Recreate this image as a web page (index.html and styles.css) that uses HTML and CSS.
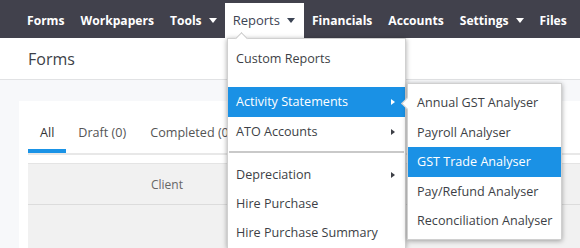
FILE: index.html
```html
<!DOCTYPE html>
<html>
<head>
<meta charset="utf-8">
<link rel="stylesheet" href="styles.css">
</head>
<body>
<nav class="topnav">
  <a class="nav-item">Forms</a>
  <a class="nav-item">Workpapers</a>
  <a class="nav-item">Tools <span class="caret"></span></a>
  <a class="nav-item active">Reports <span class="caret"></span></a>
  <a class="nav-item">Financials</a>
  <a class="nav-item">Accounts</a>
  <a class="nav-item">Settings <span class="caret"></span></a>
  <a class="nav-item">Files</a>
</nav>
<header class="page-header"><h1>Forms</h1></header>
<main class="page">
  <section class="card">
    <div class="tabs">
      <span class="tab active">All</span>
      <span class="tab">Draft (0)</span>
      <span class="tab">Completed (0)</span>
    </div>
    <div class="table-head"><span class="col-client">Client</span></div>
    <div class="table-body"></div>
  </section>
</main>

<ul class="menu menu-main">
  <li class="menu-item">Custom Reports</li>
  <li class="menu-item sub selected">Activity Statements</li>
  <li class="menu-item sub">ATO Accounts</li>
  <li class="divider"></li>
  <li class="menu-item sub">Depreciation</li>
  <li class="menu-item">Hire Purchase</li>
  <li class="menu-item">Hire Purchase Summary</li>
</ul>
<ul class="menu menu-sub">
  <li class="menu-item">Annual GST Analyser</li>
  <li class="menu-item">Payroll Analyser</li>
  <li class="menu-item selected">GST Trade Analyser</li>
  <li class="menu-item">Pay/Refund Analyser</li>
  <li class="menu-item">Reconciliation Analyser</li>
</ul>
</body>
</html>
```

FILE: styles.css
```css
* { box-sizing: border-box; }
html, body { margin: 0; padding: 0; }
body {
  width: 580px;
  height: 248px;
  overflow: hidden;
  font-family: "Open Sans", "Liberation Sans", sans-serif;
  font-size: 13px;
  color: #444;
  background: #f7f8fa;
  position: relative;
}
.topnav {
  display: flex;
  height: 38px;
  background: #41414c;
  padding: 3px 0 0 19px;
  align-items: stretch;
  overflow: hidden;
}
.nav-item {
  display: flex;
  align-items: center;
  padding: 0 8px 1px 8px;
  color: #fff;
  font-weight: 700;
  font-size: 12.1px;
  white-space: nowrap;
}
.nav-item.active {
  background: #fff;
  color: #3c4454;
  font-weight: 400;
  font-size: 13px;
  padding-right: 9px;
}
.caret {
  display: inline-block;
  width: 0; height: 0;
  border-left: 4px solid transparent;
  border-right: 4px solid transparent;
  border-top: 5px solid #fff;
  margin-left: 7px;
  margin-top: 1px;
}
.nav-item.active .caret { border-top-color: #3c4454; margin-left: 7px; }
.page-header {
  height: 42px;
  background: #fff;
  border-bottom: 1px solid #e1e2e4;
  padding: 0 0 0 28px;
  display: flex;
  align-items: center;
}
.page-header h1 {
  margin: 0;
  font-size: 16px;
  font-weight: 400;
  color: #3d3f48;
}
.page { padding: 21px 0 0 19px; }
.card {
  background: #fff;
  height: 147px;
  padding: 16px 0 0 9px;
}
.tabs {
  display: flex;
  border-bottom: 2px solid #e8e8e8;
  height: 38px;
}
.tab {
  padding: 7px 12px 0 12px;
  font-size: 12.6px;
  color: #555;
  white-space: nowrap;
}
.tab.active {
  color: #333;
  border-bottom: 4px solid #1a93e6;
}
.table-head {
  margin-top: 8px;
  background: #f1f1f1;
  border-top: 1px solid #e4e4e4;
  border-bottom: 1px solid #dcdcdc;
  height: 42px;
  display: flex;
  align-items: center;
  padding-left: 123px;
}
.col-client { color: #666; font-size: 12px; }
.table-body { background: #f1f1f1; height: 43px; }

.menu {
  position: absolute;
  margin: 0;
  padding: 0;
  list-style: none;
  background: #fff;
  box-shadow: 0 1px 5px rgba(0,0,0,0.35);
  border: 1px solid #d0d0d0;
}
.menu-main {
  left: 227px;
  top: 38px;
  width: 179px;
  padding-top: 5px;
  height: 210px;
  border-bottom: none;
  overflow: visible;
}
.menu-main::before, .menu-sub::before {
  content: "";
  position: absolute;
  width: 8px; height: 8px;
  background: #fff;
  border-left: 1px solid #c8c8c8;
  border-top: 1px solid #c8c8c8;
}
.menu-main::before { left: 9px; top: -5px; transform: rotate(45deg); }
.menu-sub::before { left: -5px; top: 15px; transform: rotate(-45deg); }
.menu-item {
  position: relative;
  height: 29px;
  line-height: 29px;
  padding-left: 8px;
  color: #3d3f46;
  font-size: 12.6px;
  white-space: nowrap;
}
.menu-item.selected { background: #1a91e5; color: #fff; }
.menu-main .menu-item.selected { height: 30px; line-height: 30px; }
.menu-item.sub::after {
  content: "";
  position: absolute;
  right: 10px;
  top: 50%;
  margin-top: -3px;
  border-top: 3px solid transparent;
  border-bottom: 3px solid transparent;
  border-left: 4px solid #3d3f46;
}
.menu-item.sub.selected::after { border-left-color: #fff; }
.divider {
  height: 2px;
  background: #c9c9c9;
  margin: 5px 1px 7px 1px;
}
.menu-main .menu-item:nth-child(1) { margin-bottom: 14px; }
.menu-sub {
  left: 407px;
  top: 83px;
  width: 155px;
  padding: 4px 0 3px 0;
  z-index: 2;
}
.menu-sub .menu-item { padding-left: 9px; height: 29.5px; line-height: 29.5px; }
```
